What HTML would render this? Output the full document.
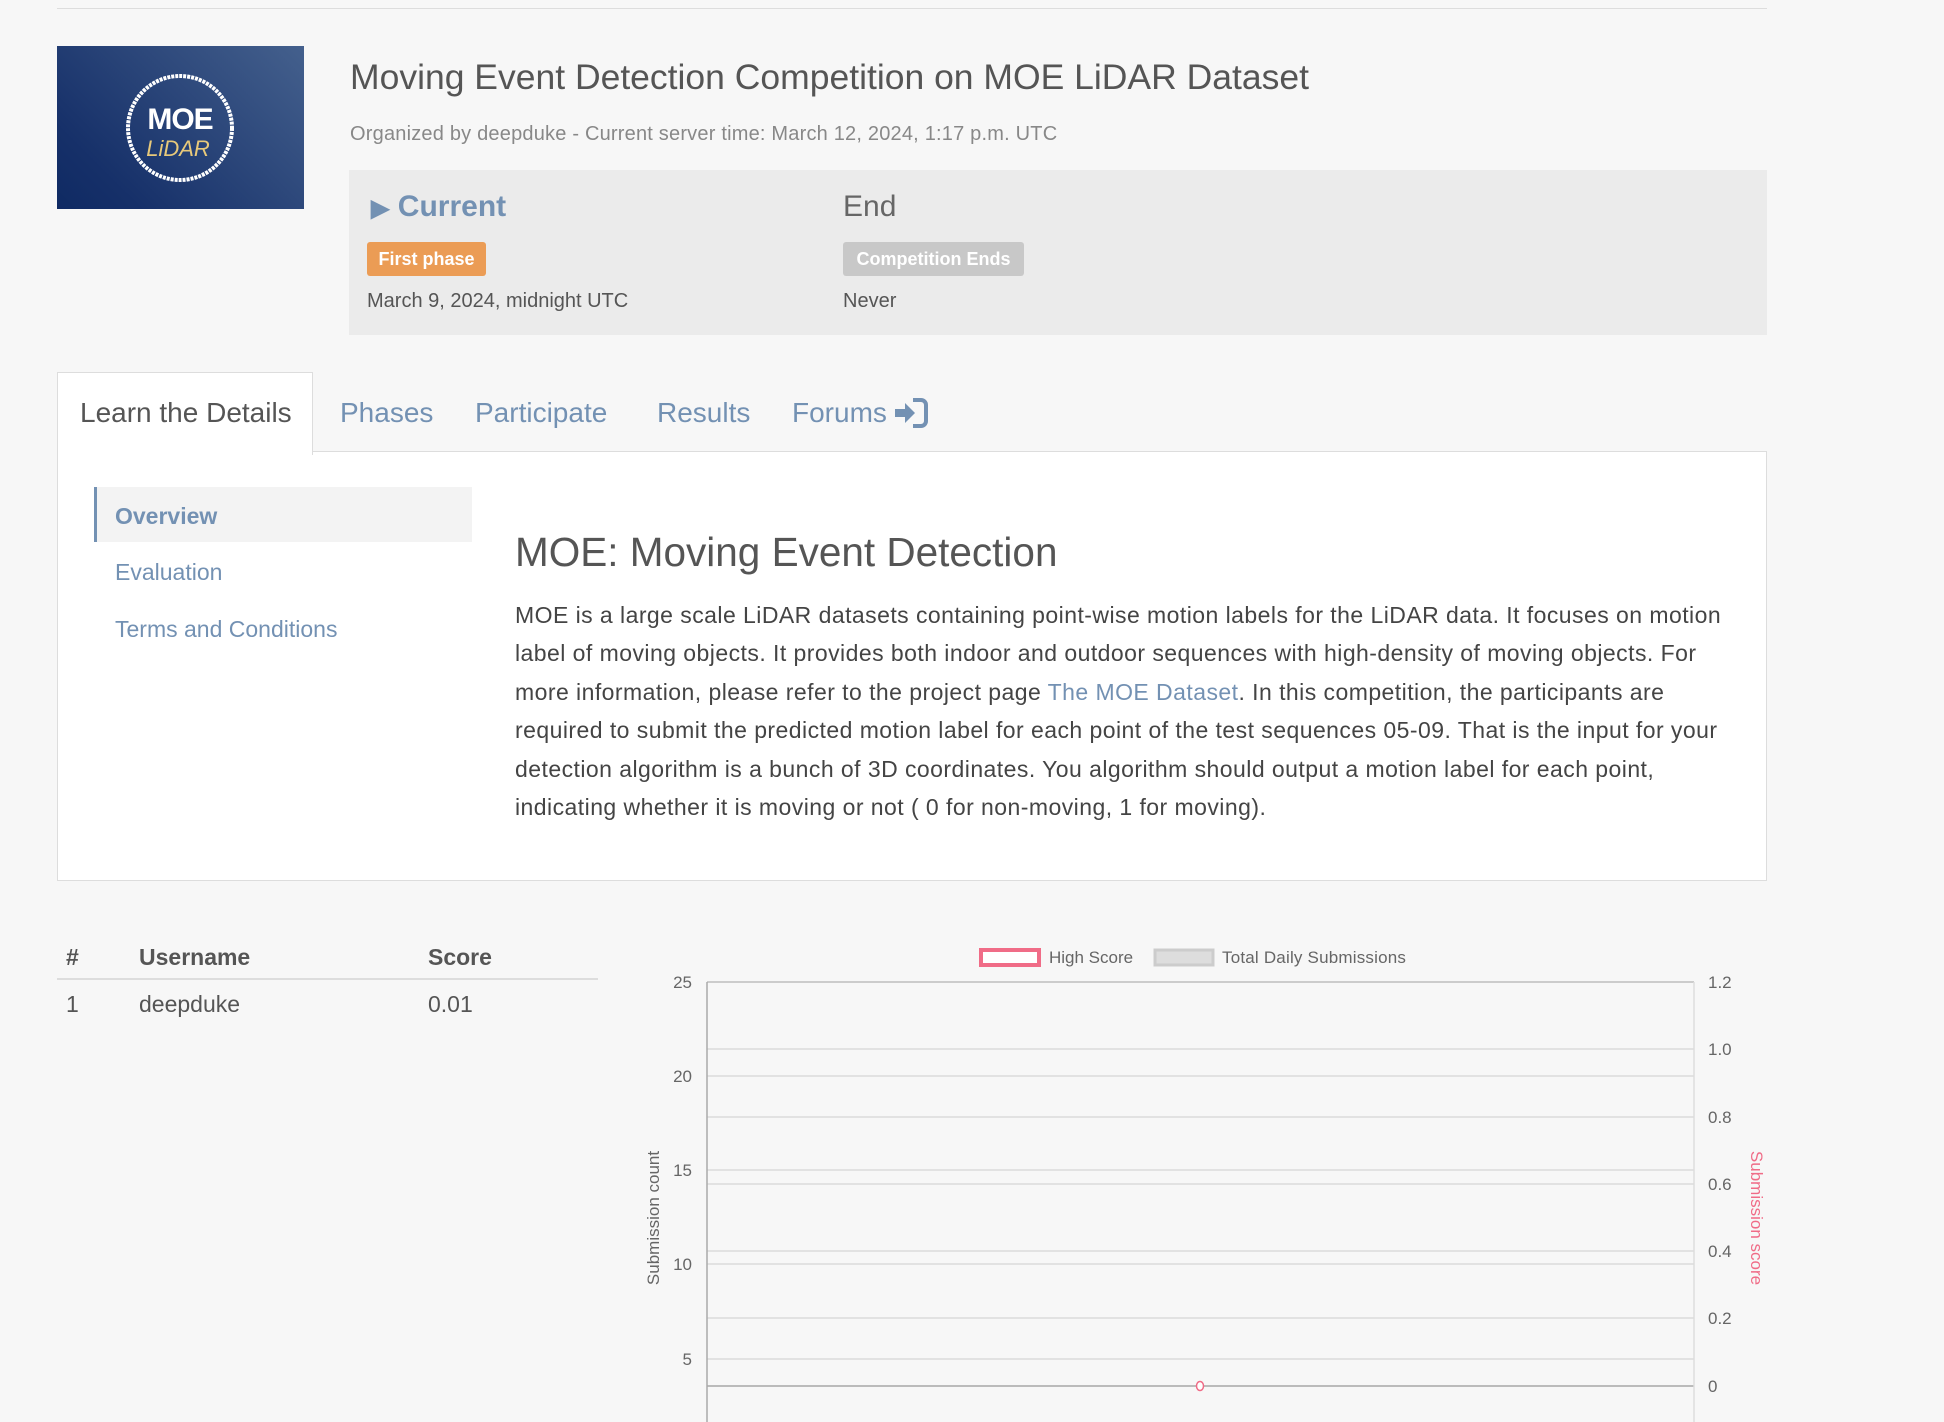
<!DOCTYPE html>
<html><head><meta charset="utf-8"><style>
body{margin:0;width:1944px;height:1422px;background:#f7f7f7;font-family:"Liberation Sans",sans-serif;color:#555;position:relative;overflow:hidden}
.a{position:absolute;white-space:nowrap}
.blue{color:#7391b3}
</style></head><body>
<div class="a" style="left:57px;top:8px;width:1710px;height:1px;background:#ddd"></div>
<div class="a" style="left:57px;top:46px;width:247px;height:163px;background:linear-gradient(225deg,#44608d,#163069 80%,#0f2a63)">
<svg width="247" height="163"><circle cx="123" cy="82" r="52" fill="none" stroke="#fff" stroke-width="4" stroke-dasharray="3 1"/><text x="123" y="83" text-anchor="middle" font-family="Liberation Sans" font-weight="bold" font-size="30" fill="#fff" letter-spacing="-1">MOE</text><text x="121" y="110" text-anchor="middle" font-family="Liberation Sans" font-style="italic" font-size="22" fill="#e8c97a">LiDAR</text></svg></div>
<div class="a" style="left:350px;top:57px;font-size:35.5px;color:#555">Moving Event Detection Competition on MOE LiDAR Dataset</div>
<div class="a" style="left:350px;top:123px;font-size:20px;letter-spacing:0.2px;color:#888">Organized by deepduke - Current server time: March 12, 2024, 1:17 p.m. UTC</div>
<div class="a" style="left:349px;top:170px;width:1418px;height:165px;background:#ebebeb"></div>
<div class="a blue" style="left:371px;top:190px;font-size:30px;font-weight:bold"><span style="font-size:24px">▶</span> Current</div>
<div class="a" style="left:843px;top:190px;font-size:30px;color:#666">End</div>
<div class="a" style="left:367px;top:242px;width:119px;height:34px;background:#eb9c55;border-radius:3px;color:#fff;font-weight:bold;font-size:18px;line-height:34px;text-align:center">First phase</div>
<div class="a" style="left:843px;top:242px;width:181px;height:34px;background:#c8c8c8;border-radius:3px;color:#fff;font-weight:bold;font-size:18px;line-height:34px;text-align:center">Competition Ends</div>
<div class="a" style="left:367px;top:290px;font-size:20px;color:#555">March 9, 2024, midnight UTC</div>
<div class="a" style="left:843px;top:290px;font-size:20px;color:#555">Never</div>
<div class="a" style="left:57px;top:451px;width:1708px;height:428px;background:#fff;border:1px solid #ddd"></div>
<div class="a" style="left:57px;top:372px;width:254px;height:82px;background:#fff;border:1px solid #ddd;border-bottom:none"></div>
<div class="a" style="left:80px;top:397px;font-size:28px;color:#555">Learn the Details</div>
<div class="a blue" style="left:340px;top:397px;font-size:28px">Phases</div>
<div class="a blue" style="left:475px;top:397px;font-size:28px">Participate</div>
<div class="a blue" style="left:657px;top:397px;font-size:28px">Results</div>
<div class="a blue" style="left:792px;top:397px;font-size:28px">Forums</div>
<svg class="a" style="left:893px;top:397px" width="36" height="32" viewBox="0 0 36 32"><path d="M2 12h10V6l10 10-10 10v-6H2z" fill="#7391b3"/><path d="M20 3h8a5 5 0 0 1 5 5v16a5 5 0 0 1-5 5h-8" fill="none" stroke="#7391b3" stroke-width="4"/></svg>
<div class="a" style="left:94px;top:487px;width:375px;height:55px;background:#f3f3f3;border-left:3px solid #7391b3"></div>
<div class="a blue" style="left:115px;top:503px;font-size:23px;font-weight:bold">Overview</div>
<div class="a blue" style="left:115px;top:559px;font-size:23px">Evaluation</div>
<div class="a blue" style="left:115px;top:616px;font-size:23px">Terms and Conditions</div>
<div class="a" style="left:515px;top:529px;font-size:40.5px;color:#555">MOE: Moving Event Detection</div>
<div class="a" style="left:515px;top:596px;font-size:23px;letter-spacing:0.45px;line-height:38.4px;color:#444">MOE is a large scale LiDAR datasets containing point-wise motion labels for the LiDAR data. It focuses on motion<br>label of moving objects. It provides both indoor and outdoor sequences with high-density of moving objects. For<br>more information, please refer to the project page <span class="blue">The MOE Dataset</span>. In this competition, the participants are<br>required to submit the predicted motion label for each point of the test sequences 05-09. That is the input for your<br>detection algorithm is a bunch of 3D coordinates. You algorithm should output a motion label for each point,<br>indicating whether it is moving or not ( 0 for non-moving, 1 for moving).</div>
<div class="a" style="left:66px;top:944px;font-size:23px;font-weight:bold;color:#555">#</div>
<div class="a" style="left:139px;top:944px;font-size:23px;font-weight:bold;color:#555">Username</div>
<div class="a" style="left:428px;top:944px;font-size:23px;font-weight:bold;color:#555">Score</div>
<div class="a" style="left:57px;top:978px;width:541px;height:2px;background:#ddd"></div>
<div class="a" style="left:66px;top:991px;font-size:23px">1</div>
<div class="a" style="left:139px;top:991px;font-size:23px">deepduke</div>
<div class="a" style="left:428px;top:991px;font-size:23px">0.01</div>
<svg class="a" style="left:0;top:0" width="1944" height="1422" font-family="Liberation Sans" font-size="17" fill="#666">
<rect x="981" y="950" width="58" height="15" fill="#fff" stroke="#f06c87" stroke-width="4"/>
<text x="1049" y="963">High Score</text>
<rect x="1155" y="950" width="58" height="15" fill="#ddd" stroke="#ccc" stroke-width="3"/>
<text x="1222" y="963" letter-spacing="0.2">Total Daily Submissions</text>
<g stroke="#e2e2e2" stroke-width="2">
<line x1="707" y1="982" x2="1694" y2="982" stroke="#ccc"/>
<line x1="707" y1="1049" x2="1694" y2="1049"/><line x1="707" y1="1076" x2="1694" y2="1076"/>
<line x1="707" y1="1117" x2="1694" y2="1117"/><line x1="707" y1="1170" x2="1694" y2="1170"/>
<line x1="707" y1="1184" x2="1694" y2="1184"/><line x1="707" y1="1251" x2="1694" y2="1251"/>
<line x1="707" y1="1264" x2="1694" y2="1264"/><line x1="707" y1="1318" x2="1694" y2="1318"/>
<line x1="707" y1="1359" x2="1694" y2="1359"/><line x1="707" y1="1386" x2="1694" y2="1386" stroke="#bbb"/>
</g>
<line x1="707" y1="982" x2="707" y2="1422" stroke="#aaa" stroke-width="1.5"/>
<line x1="1694" y1="982" x2="1694" y2="1422" stroke="#ddd" stroke-width="1.5"/>
<g text-anchor="end"><text x="692" y="988">25</text><text x="692" y="1082">20</text><text x="692" y="1176">15</text><text x="692" y="1270">10</text><text x="692" y="1365">5</text></g>
<g><text x="1708" y="988">1.2</text><text x="1708" y="1055">1.0</text><text x="1708" y="1123">0.8</text><text x="1708" y="1190">0.6</text><text x="1708" y="1257">0.4</text><text x="1708" y="1324">0.2</text><text x="1708" y="1392">0</text></g>
<text transform="translate(659,1218) rotate(-90)" text-anchor="middle" font-size="17">Submission count</text>
<text transform="translate(1751,1218) rotate(90)" text-anchor="middle" font-size="17" fill="#f06c87">Submission score</text>
<ellipse cx="1200" cy="1386" rx="3.5" ry="4.5" fill="#fff" stroke="#f06c87" stroke-width="1.5"/>
</svg>
</body></html>
